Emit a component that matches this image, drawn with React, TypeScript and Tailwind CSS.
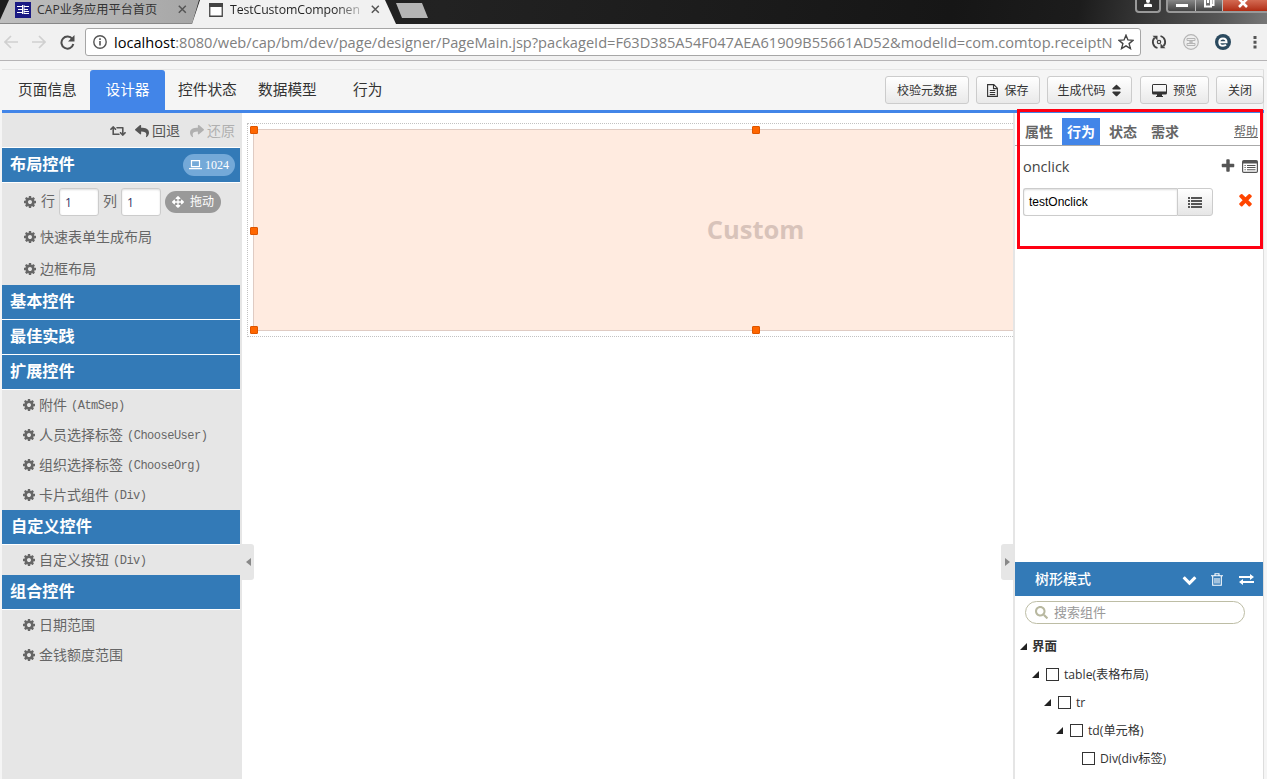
import React from "react";
import type { ReactNode } from "react";
import { FaArrowsAlt, FaReply, FaRetweet, FaSearch, FaShare, FaSort } from "react-icons/fa";

const ui = "font-['Open_Sans','Noto_Sans_CJK_SC',sans-serif]";
const song = "font-['Liberation_Sans','Noto_Sans_CJK_SC',sans-serif]";

const glyphs = {
  cog: "M1152 896q0-106-75-181t-181-75-181 75-75 181 75 181 181 75 181-75 75-181zm512-109v222q0 12-8 23t-20 13l-185 28q-19 54-39 91 35 50 107 138 10 12 10 25t-9 23q-27 37-99 108t-94 71q-12 0-26-9l-138-108q-44 23-91 38-16 136-29 186-7 28-36 28h-222q-14 0-24.500-8.500t-11.500-21.500l-28-184q-49-16-90-37l-141 107q-10 9-25 9-14 0-25-11-126-114-165-168-7-10-7-23 0-12 8-23 15-21 51-66.500t54-70.500q-27-50-41-99l-183-27q-13-2-21-12.500t-8-23.500v-222q0-12 8-23t19-13l186-28q14-46 39-92-40-57-107-138-10-12-10-24 0-10 9-23 26-36 98.500-107.500t94.500-71.500q13 0 26 10l138 107q44-23 91-38 16-136 29-186 7-28 36-28h222q14 0 24.500 8.500t11.500 21.500l28 184q49 16 90 37l142-107q9-9 24-9 13 0 25 10 129 119 165 170 7 8 7 22 0 12-8 23-15 21-51 66.500t-54 70.500q26 50 41 98l183 28q13 2 21 12.500t8 23.500z",
  plus: "M1600 736v192q0 40-28 68t-68 28h-416v416q0 40-28 68t-68 28h-192q-40 0-68-28t-28-68v-416h-416q-40 0-68-28t-28-68v-192q0-40 28-68t68-28h416v-416q0-40 28-68t68-28h192q40 0 68 28t28 68v416h416q40 0 68 28t28 68z",
  times: "M1490 1322q0 40-28 68l-136 136q-28 28-68 28t-68-28l-294-294-294 294q-28 28-68 28t-68-28l-136-136q-28-28-28-68t28-68l294-294-294-294q-28-28-28-68t28-68l136-136q28-28 68-28t68 28l294 294 294-294q28-28 68-28t68 28l136 136q28 28 28 68t-28 68l-294 294 294 294q28 28 28 68z",
  down: "M1683 808l-742 741q-19 19-45 19t-45-19l-742-741q-19-19-19-45.500t19-45.500l166-165q19-19 45-19t45 19l531 531 531-531q19-19 45-19t45 19l166 165q19 19 19 45.500t-19 45.500z",
};

function Glyph({ name, className }: { name: keyof typeof glyphs; className: string }) {
  return <svg className={`shrink-0 ${className}`} viewBox="0 0 1792 1792" fill="currentColor"><path d={glyphs[name]} /></svg>;
}

function TabStrip() {
  return (
    <div className="relative flex h-6 shrink-0 overflow-hidden bg-[linear-gradient(100deg,#1c1c1c_0%,#222_35%,#161616_75%,#1c1c1c_85%,#555_96%,#777_100%)]">
      <div className="flex h-6 w-[200px] shrink-0 items-start border-b border-[#888] bg-linear-to-r from-[#bfbfbf] to-[#a6a6a6] pl-[15px] [clip-path:polygon(9px_0,199px_0,192px_100%,0_100%,0_20px)]">
        <svg className="mt-[2px] shrink-0" width="16" height="16" viewBox="0 0 16 16">
          <rect width="16" height="16" fill="#1b1b83" />
          <path d="M2 4.500h5M3 7.500h4M2 10.500h5M9 4.500h5M9 7.500h4M9 9.500h5M9 11.500h5" stroke="#fff" /><path d="M7.500 3v9M9 3v9" stroke="#fff" />
        </svg>
        <span className={`ml-[6px] w-[141px] whitespace-nowrap text-[12.200px] leading-5 text-[#333] ${ui}`}>CAP业务应用平台首页</span>
        <svg className="mt-[5px] shrink-0" width="9" height="9" viewBox="0 0 9 9"><path d="M.8.8l7 7M7.800.8l-7 7" stroke="#555" strokeWidth="1.500" /></svg>
      </div>
      <div className="-ml-[8px] flex h-6 w-[206px] shrink-0 items-start bg-[#f1f1f1] pl-[17px] [clip-path:polygon(8px_0,193px_0,204px_100%,0_100%)]">
        <svg className="mt-[3px] shrink-0" width="14" height="14" viewBox="0 0 14 14"><path d="M.75 1h12.500v12.250H.75z" fill="#fff" stroke="#444" strokeWidth="1.300" /><path d="M0 0h14v4H0z" fill="#444" /></svg>
        <span className={`ml-[7px] mr-[9px] w-[132px] whitespace-nowrap bg-linear-to-r from-[#222] from-80% to-[#22222233] bg-clip-text text-[12.300px] leading-5 tracking-[-0.100px] text-transparent ${ui}`}>TestCustomComponen</span>
        <svg className="mt-[5px] shrink-0" width="9" height="9" viewBox="0 0 9 9"><path d="M.8.8l7 7M7.800.8l-7 7" stroke="#555" strokeWidth="1.500" /></svg>
      </div>
      <div className="mt-[3px] -ml-[2px] h-[15px] w-8 bg-[#b5b5b5] [clip-path:polygon(0_0,26px_0,100%_100%,6px_100%)]" />
      <div className="ml-auto flex items-start">
        <div className="mr-[5px] flex h-[13px] w-[26px] items-start justify-center rounded-b border-2 border-t-0 border-[#999] bg-[#333]">
          <svg width="10" height="8" viewBox="0 0 10 8"><circle cx="5" cy="1" r="2" fill="#fff" /><path d="M1 7V5q0-1.500 4-1.500T9 5v2z" fill="#fff" /></svg>
        </div>
        <div className="flex h-[13px] w-[101px] overflow-hidden rounded-bl border-b-2 border-l-2 border-[#999]">
          <div className="flex w-7 justify-center border-r border-[#bbb] bg-linear-to-b from-[#888] to-[#444] pt-1"><div className="h-[3px] w-3 bg-white" /></div>
          <div className="flex w-[27px] justify-center border-r border-[#bbb] bg-linear-to-b from-[#888] to-[#444]">
            <svg width="12" height="9" viewBox="0 0 12 9"><path d="M2 0v6.500h6V0M5 0v3M10.500 0v5h-2" fill="none" stroke="#fff" strokeWidth="2" /></svg>
          </div>
          <div className="flex flex-1 justify-center bg-linear-to-b from-[#d36a52] to-[#b02a10] pr-1">
            <svg width="12" height="9" viewBox="0 0 12 9"><path d="M2-1l8 8M10-1L2 7" stroke="#fff" strokeWidth="2.600" /></svg>
          </div>
        </div>
      </div>
    </div>
  );
}

function AddressBar() {
  return (
    <div className="flex h-[37px] shrink-0 items-center border-b border-[#b6b4b6] bg-[#f1f1f1]">
      <svg className="ml-1 shrink-0" width="14" height="14" viewBox="0 0 14 14"><path d="M14 7H1.500M7 1L1 7l6 6" fill="none" stroke="#d0d0d0" strokeWidth="1.700" /></svg>
      <svg className="ml-[14px] shrink-0" width="14" height="14" viewBox="0 0 14 14"><path d="M0 7h12.500M7 1l6 6-6 6" fill="none" stroke="#d0d0d0" strokeWidth="1.700" /></svg>
      <svg className="ml-[14px] shrink-0" width="15" height="15" viewBox="0 0 15 15"><path d="M12.400 4.200A6 6 0 1 0 13.300 9" fill="none" stroke="#4d4d4d" strokeWidth="2" /><path d="M14.500 0v6.500H8z" fill="#4d4d4d" /></svg>
      <div className="ml-[10px] flex h-7 w-[1056px] shrink-0 items-center rounded-[3px] border border-[#a6a6a6] bg-white">
        <svg className="ml-[7px] shrink-0" width="14" height="14" viewBox="0 0 14 14"><circle cx="7" cy="7" r="6.200" fill="none" stroke="#555" strokeWidth="1.400" /><path d="M7 6v4.500M7 3.300v1.600" stroke="#555" strokeWidth="1.600" /></svg>
        <div className={`mb-px ml-[7px] w-[1001px] whitespace-nowrap text-[14.620px] leading-6 text-[#808080] ${ui}`}>
          <span className="text-black">localhost</span>:8080/web/cap/bm/dev/page/designer/PageMain.jsp?packageId=F63D385A54F047AEA61909B55661AD52&amp;modelId=com.comtop.receiptN
        </div>
        <svg className="ml-[3px] shrink-0" width="16" height="16" viewBox="0 0 14 14"><path d="M7 1l1.700 4.200 4.500.3-3.500 2.900 1.200 4.400L7 10.400l-3.900 2.400 1.200-4.400L.8 5.500l4.500-.3z" fill="none" stroke="#444" strokeWidth="1.200" /></svg>
      </div>
      <svg className="ml-[10px] shrink-0" width="16" height="16" viewBox="0 0 16 16"><path d="M6.500 14A6.200 6.200 0 0 1 3.500 3.800M9.500 2a6.200 6.200 0 0 1 3 10.200" fill="none" stroke="#444" strokeWidth="1.800" /><path d="M1.500 1.800H6.500V6.500zM14.500 14.200H9.500V9.500z" fill="#444" /><circle cx="8" cy="8" r="1.700" fill="none" stroke="#444" strokeWidth="1.200" /></svg>
      <svg className="ml-4 shrink-0" width="16" height="16" viewBox="0 0 16 16"><circle cx="8" cy="8" r="7.300" fill="#eee" stroke="#b5b5b5" strokeWidth="1.200" /><path d="M4 4.500h8v2H4zM4 11.500h8v-2H4zM5.500 6.500l5 3M10.500 6.500l-5 3" fill="none" stroke="#b5b5b5" /></svg>
      <svg className="ml-4 shrink-0" width="16" height="16" viewBox="0 0 16 16"><circle cx="8" cy="8" r="8" fill="#2b4a5f" /><path d="M4.300 8.200h7.200c0-2.200-1.400-3.800-3.500-3.800S4.300 6 4.300 8.200s1.500 3.600 3.700 3.600c1.300 0 2.400-.4 3-1.100" fill="none" stroke="#fff" strokeWidth="2" /></svg>
      <svg className="ml-[22px] shrink-0" width="4" height="14" viewBox="0 0 4 14"><path d="M.5 1h3v3h-3zM.5 5.800h3v3h-3zM.5 10.600h3v3h-3z" fill="#555" /></svg>
    </div>
  );
}

function Btn({ w, ml, children }: { w: string; ml?: string; children: ReactNode }) {
  return (
    <button className={`flex h-7 items-center justify-center whitespace-nowrap rounded-[3px] border border-[#ccc] bg-linear-to-b from-white to-[#e9e9e9] pt-px text-[12px] text-[#333] ${w} ${ml ?? ""}`}>
      {children}
    </button>
  );
}

function NavBar() {
  return (
    <div className={`ml-[2px] mt-2 flex h-[44px] w-[1262px] shrink-0 border-b-[3px] border-[#4285e8] bg-[#f5f5f5] text-[14.700px] text-[#333] shadow-[inset_0_1px_0_#e5e5e5,inset_-1px_0_0_#ddd] ${song}`}>
      <div className="mt-px flex h-10 items-center whitespace-nowrap">
        <span className="w-[88px] pl-[16px]">页面信息</span>
        <span className="flex h-10 w-[75px] items-center justify-center rounded-t-[3px] bg-[#4285e8] text-white">设计器</span>
        <span className="w-[80px] pl-[13px]">控件状态</span>
        <span className="w-[94px] pl-[13px]">数据模型</span>
        <span className="pl-[14px]">行为</span>
      </div>
      <div className="ml-auto flex pt-[7px]">
        <Btn w="w-[84px]">校验元数据</Btn>
        <Btn w="w-16" ml="ml-[7px]">
          <svg className="mr-[6px]" width="11" height="13" viewBox="0 0 11 13"><path d="M.6.6h6.200l3.600 3.600v8.200H.6zM6.500.6v4h4M2.800 6.500h5.400M2.800 8.500h5.400M2.800 10.500h5.400" fill="none" stroke="#333" strokeWidth="1.100" /></svg>保存
        </Btn>
        <Btn w="w-[85px]" ml="ml-[7px]"><span className="ml-[2px]">生成代码</span><FaSort className="ml-[3px] size-[15px]" /></Btn>
        <Btn w="w-[69px]" ml="ml-2">
          <svg className="mr-[6px]" width="15" height="13" viewBox="0 0 15 13"><path d="M1.500 0h12A1.500 1.500 0 0 1 15 1.500v7.500a1.500 1.500 0 0 1-1.500 1.500H10V12h1v1H4v-1h1v-1.500H1.500A1.500 1.500 0 0 1 0 9V1.500A1.500 1.500 0 0 1 1.500 0zM1 1v6.500h13V1z" fill="#333" fillRule="evenodd" /></svg>预览
        </Btn>
        <Btn w="w-12" ml="ml-[7px]">关闭</Btn>
      </div>
    </div>
  );
}

function Heading({ label, children, inset }: { label: string; children?: ReactNode; inset?: boolean }) {
  return (
    <div className={`flex h-[35px] w-[238px] items-center justify-between border-b border-white bg-[#337ab7] pr-[5px] text-[16.200px] font-bold text-white ${inset ? "pl-[9px]" : "pl-2"}`}>
      <span className="-mt-[2px]">{label}</span>{children}
    </div>
  );
}

function Item({ label, code, tall }: { label: string; code?: string; tall?: boolean }) {
  return (
    <div className={`flex items-center whitespace-nowrap text-[14px] text-[#666] ${tall ? "h-8 pl-[21px]" : "h-[30px] pl-[20px]"}`}>
      <Glyph name="cog" className="mr-[3px] size-[14px]" />
      {label}
      {code && <span className="ml-[4px] pt-[2px] font-['Liberation_Mono',monospace] text-[12px] tracking-[-0.500px]">({code})</span>}
    </div>
  );
}

function Sidebar() {
  return (
    <aside className={`w-[240px] shrink-0 bg-[#e6e6e6] ${song}`}>
      <div className="flex h-[35px] w-[238px] items-center justify-end border-b border-white pr-[5px] pt-[2px] text-[14px] text-[#555]">
        <FaRetweet className="mr-[9px] size-[16px]" />
        <FaReply className="mr-[3px] size-[14px]" />回退
        <FaShare className="ml-[10px] mr-[3px] size-[14px] text-[#b0b0b0]" /><span className="text-[#b0b0b0]">还原</span>
      </div>
      <Heading label="布局控件">
        <span className="flex h-[22px] w-[52px] items-center justify-center gap-[3px] rounded-full bg-[#74a9d8] text-[12px] font-normal">
          <svg width="13" height="10" viewBox="0 0 13 10"><path d="M2.500.6h8v6h-8zM0 8.600h13" fill="none" stroke="#fff" strokeWidth="1.200" /></svg><span className="font-['Liberation_Serif',serif]">1024</span>
        </span>
      </Heading>
      <div className="flex h-[38px] items-center pl-[21px] text-[14px] text-[#666]">
        <Glyph name="cog" className="mr-1 size-[14px]" /><span className="-mt-px">行</span>
        <input readOnly value="1" className={`ml-[4px] mr-[4px] h-7 w-10 rounded-[3px] border border-[#ccc] bg-white pl-[5px] text-[12px] text-[#336] shadow-[inset_0_1px_2px_#ddd] ${ui}`} /><span className="-mt-px">列</span>
        <input readOnly value="1" className={`ml-1 h-7 w-10 rounded-[3px] border border-[#ccc] bg-white pl-[5px] text-[12px] text-[#336] shadow-[inset_0_1px_2px_#ddd] ${ui}`} />
        <span className="ml-1 flex h-[22px] w-14 items-center justify-center gap-[6px] rounded-full bg-[#999] text-[12px] text-white"><FaArrowsAlt className="size-[12px]" />拖动</span>
      </div>
      <Item label="快速表单生成布局" tall />
      <Item label="边框布局" tall />
      <Heading label="基本控件" />
      <Heading label="最佳实践" />
      <Heading label="扩展控件" />
      <Item label="附件" code="AtmSep" />
      <Item label="人员选择标签" code="ChooseUser" />
      <Item label="组织选择标签" code="ChooseOrg" />
      <Item label="卡片式组件" code="Div" />
      <Heading label="自定义控件" inset />
      <Item label="自定义按钮" code="Div" />
      <Heading label="组合控件" />
      <Item label="日期范围" />
      <Item label="金钱额度范围" />
    </aside>
  );
}

function Handle({ at }: { at: string }) {
  return <i className={`absolute size-2 rounded-[1px] border border-[#dd5500] bg-[#ff6600] ${at}`} />;
}

function Canvas() {
  return (
    <main className="relative w-[771px] shrink-0 overflow-hidden bg-white pl-[5px] pt-[10px]">
      <div className="h-[214px] w-[1020px] border border-dotted border-[#c2c2c2] pl-[5px] pt-[5px]">
        <div className={`relative h-[202px] w-[1005px] border border-[#dfcbc3] bg-[#ffebe0] pt-[79px] text-center text-[25.500px] font-bold leading-10 text-[#d8c3ba] ${ui}`}>
          Custom
          <Handle at="-left-[4px] -top-[4px]" />
          <Handle at="left-[498px] -top-[4px]" />
          <Handle at="-left-[4px] top-[97px]" />
          <Handle at="-left-[4px] top-[196px]" />
          <Handle at="left-[498px] top-[196px]" />
        </div>
      </div>
      <div className="absolute left-0 top-[431px] flex h-9 w-3 items-center justify-center rounded-r-[3px] bg-[#e6e6e6]">
        <svg width="5" height="8" viewBox="0 0 5 8"><path d="M5 0v8L0 4z" fill="#888" /></svg>
      </div>
      <div className="absolute right-0 top-[431px] flex h-9 w-3 items-center justify-center rounded-l-[3px] bg-[#e6e6e6]">
        <svg width="5" height="8" viewBox="0 0 5 8"><path d="M0 0v8l5-4z" fill="#888" /></svg>
      </div>
    </main>
  );
}

function TreeRow({ label, pad, leaf, root }: { label: string; pad: string; leaf?: boolean; root?: boolean }) {
  return (
    <div className={`flex h-7 items-center whitespace-nowrap text-[12.200px] text-[#333] ${pad}`}>
      {!leaf && <svg className="mb-[2px] mr-[7px] shrink-0" width="7" height="7" viewBox="0 0 7 7"><path d="M7 0v7H0z" fill="#222" /></svg>}
      {!root && <i className="mb-[2px] mr-[5px] size-[13px] shrink-0 border border-[#333] bg-white" />}
      <span className={root ? "-ml-[2px] text-[12.500px] font-bold" : ""}>{label}</span>
    </div>
  );
}

function Inspector() {
  return (
    <aside className={`flex w-[250px] shrink-0 flex-col border-l-2 border-l-[#e5e5e5] bg-white ${ui}`}>
      <div className="flex h-[33px] items-end border-b border-[#aaa] pr-[5px] text-[14px] font-semibold text-[#666]">
        <span className="w-[47px] pb-[3px] pl-[10px]">属性</span>
        <span className="flex h-[27px] w-[38px] items-center justify-center bg-[#4285e8] pb-px text-white">行为</span>
        <span className="w-[42px] pb-[3px] pl-[9px]">状态</span>
        <span className="pb-[3px] pl-[9px]">需求</span>
        <span className="ml-auto pb-[4px] text-[12px] font-normal leading-[18px] underline">帮助</span>
      </div>
      <div className="mt-[9px] flex h-[22px] items-center pl-2 pr-[5px] text-[14.500px] text-[#444]">
        <span className="mt-[2px]">onclick</span>
        <Glyph name="plus" className="ml-auto mr-[6px] size-[16px] text-[#555]" />
        <svg width="16" height="13" viewBox="0 0 16 13"><rect x=".6" y=".6" width="14.800" height="11.800" rx="1.200" fill="none" stroke="#555" strokeWidth="1.200" /><path d="M1 1h14v2.500H1zM2.500 5h1.200v1H2.500zM5 5h8.500v1H5zM2.500 7.100h1.200v1H2.500zM5 7.100h8.500v1H5zM2.500 9.200h1.200v1H2.500zM5 9.200h8.500v1H5z" fill="#555" /></svg>
      </div>
      <div className="mt-[11px] flex h-7 items-center pl-2">
        <div className="flex h-7 w-[154px] items-center rounded-l-[3px] border border-r-0 border-[#ccc] pl-[5px] font-['Liberation_Sans',sans-serif] text-[12px] text-black shadow-[inset_0_1px_2px_#ddd]">testOnclick</div>
        <div className="flex h-7 w-[36px] items-center justify-center rounded-r-[3px] border border-[#ccc] bg-linear-to-b from-white to-[#e6e6e6]">
          <svg width="14" height="11" viewBox="0 0 14 11"><path d="M0 0h2v2H0zM3 0h11v2H3zM0 3h2v2H0zM3 3h11v2H3zM0 6h2v2H0zM3 6h11v2H3zM0 9h2v2H0zM3 9h11v2H3z" fill="#555" /></svg>
        </div>
        <Glyph name="times" className="mb-[6px] ml-[23px] size-[19px] text-[#ff4500]" />
      </div>
      <div className="h-[346px]" />
      <div className="flex h-[34px] w-[248px] shrink-0 items-center bg-[#337ab7] pl-5 pr-[9px] text-[14px] font-medium text-white">
        <span className="-mt-[2px]">树形模式</span>
        <Glyph name="down" className="ml-auto mr-[14px] size-[15px]" />
        <svg className="mr-4" width="12" height="13" viewBox="0 0 12 13"><path d="M4 2.300V.7h4v1.600M0 2.800h12M1.700 3v9.300h8.600V3M4 5v5.500M6 5v5.500M8 5v5.500" fill="none" stroke="#fff" strokeWidth="1.100" /></svg>
        <svg width="15" height="11" viewBox="0 0 15 11"><path d="M0 2h11V0l4 3-4 3V4H0zM15 7H4V5L0 8l4 3V9h11z" fill="#fff" /></svg>
      </div>
      <div className="ml-[10px] mt-[5px] flex h-[23px] w-[220px] shrink-0 items-center rounded-full border border-[#bdbda5] pl-[9px] text-[13px] text-[#999]">
        <FaSearch className="mr-[6px] size-[13px] text-[#b8b8a0]" />搜索组件
      </div>
      <div className="mt-[9px]">
        <TreeRow label="界面" pad="pl-[5px]" root />
        <TreeRow label="table(表格布局)" pad="pl-[17px]" />
        <TreeRow label="tr" pad="pl-[29px]" />
        <TreeRow label="td(单元格)" pad="pl-[41px]" />
        <TreeRow label="Div(div标签)" pad="pl-[67px]" leaf />
      </div>
    </aside>
  );
}

export default function App() {
  return (
    <div className="relative flex h-[779px] w-[1267px] flex-col overflow-hidden bg-[#f5f5f5]">
      <TabStrip />
      <AddressBar />
      <NavBar />
      <div className="ml-[2px] flex min-h-0 w-[1262px] flex-1 overflow-hidden border-r border-[#ddd]">
        <Sidebar />
        <Canvas />
        <Inspector />
      </div>
      <div className="pointer-events-none absolute left-[1017px] top-[109px] h-[140px] w-[246px] border-[3px] border-[#ff0012]" />
    </div>
  );
}
